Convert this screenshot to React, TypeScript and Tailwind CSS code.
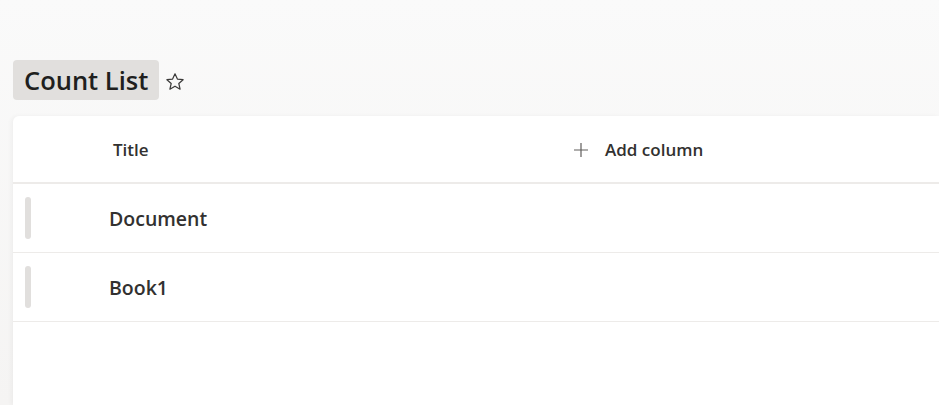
import { useState } from "react";

type Item = { id: number; title: string };

const items: Item[] = [
  { id: 1, title: "Document" },
  { id: 2, title: "Book1" },
];

function StarIcon() {
  return (
    <svg width="20" height="20" viewBox="0 0 20 20" fill="none" className="text-[#3b3a39]">
      <path
        d="M10 1.8l2.4 5.3 5.7.6-4.3 3.8 1.3 5.7L10 14.2 4.9 17.2l1.3-5.7-4.3-3.8 5.7-.6z"
        stroke="currentColor"
        strokeWidth="1.2"
        strokeLinejoin="round"
      />
    </svg>
  );
}

function PlusIcon() {
  return (
    <svg width="16" height="16" viewBox="0 0 16 16" className="text-[#605e5c]">
      <path d="M8 1v14M1 8h14" stroke="currentColor" strokeWidth="1.2" />
    </svg>
  );
}

export default function App() {
  const [favorite, setFavorite] = useState(false);

  return (
    <div
      className="flex h-screen w-full flex-col overflow-hidden bg-gradient-to-b from-[#fafafa] to-[#f5f4f3] text-[#323130]"
      style={{ fontFamily: '"Segoe UI", "Open Sans", "Noto Sans", sans-serif' }}
    >
      <div className="flex items-center gap-[6px] pl-[13px] pt-[60px]">
        <h1 className="flex h-[40px] items-center rounded-[4px] bg-[#e1dfdd] px-[11px] text-[25.5px] font-[550] text-[#201f1e]">
          Count List
        </h1>
        <button onClick={() => setFavorite(!favorite)} className="mt-[3px] flex items-center">
          <StarIcon />
        </button>
      </div>

      <div className="mt-[16px] ml-[13px] flex-1 rounded-tl-[6px] bg-white shadow-[-2px_0_4px_rgba(0,0,0,0.04)]">
        <div className="flex h-[68px] items-center border-b-2 border-[#edebe9] pt-[1px]">
          <div className="w-[560px] pl-[100px] text-[17px] font-[550]">Title</div>
          <button className="flex items-center gap-[16px] text-[17px] font-[550]">
            <PlusIcon />
            Add column
          </button>
        </div>
        {items.map((item) => (
          <div key={item.id} className="flex h-[69px] items-center border-b border-[#edebe9]">
            <div className="ml-[12px] h-[42px] w-[6px] rounded-[3px] bg-[#e1dfdd]" />
            <div className="pl-[78px] pt-[1px] text-[19.5px] font-[550]">{item.title}</div>
          </div>
        ))}
      </div>
    </div>
  );
}
